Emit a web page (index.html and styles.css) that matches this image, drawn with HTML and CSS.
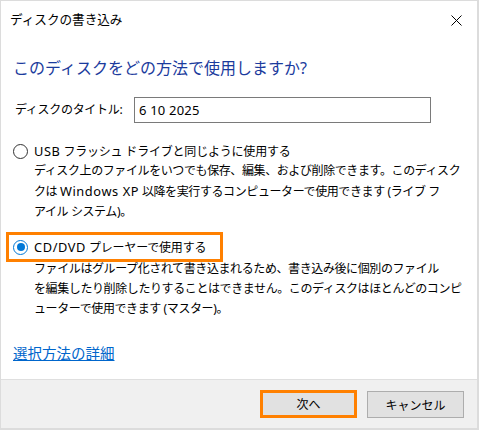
FILE: index.html
```html
<!DOCTYPE html>
<html lang="ja">
<head>
<meta charset="utf-8">
<title>ディスクの書き込み</title>
<link rel="stylesheet" href="styles.css">
</head>
<body>
<div class="window">
  <div class="titlebar">
    <span class="title">ディスクの書き込み</span>
    <svg class="close" width="11" height="11" viewBox="0 0 11 11"><path d="M0.5 0.5 L10.5 10.5 M10.5 0.5 L0.5 10.5" stroke="#000" stroke-width="1" fill="none"/></svg>
  </div>
  <div class="content">
    <div class="heading">このディスクをどの方法で使用しますか?</div>
    <div class="title-row">
      <span class="field-label">ディスクのタイトル:</span>
      <span class="field-input"><span class="latin">6 10 2025</span></span>
    </div>
    <div class="option">
      <div class="option-row">
        <span class="radio"></span>
        <span class="option-label"><span class="latin">USB</span> フラッシュ ドライブと同じように使用する</span>
      </div>
      <div class="desc">ディスク上のファイルをいつでも保存、編集、および削除できます。このディスク<br>クは <span class="latin">Windows XP</span> 以降を実行するコンピューターで使用できます (ライブ フ<br>アイル システム)。</div>
    </div>
    <div class="option option-second">
      <div class="option-row focused">
        <span class="radio checked"><span class="dot"></span></span>
        <span class="option-label"><span class="latin">CD/DVD</span> プレーヤーで使用する</span>
      </div>
      <div class="desc desc-second">ファイルはグループ化されて書き込まれるため、書き込み後に個別のファイル<br>を編集したり削除したりすることはできません。このディスクはほとんどのコンピ<br>ューターで使用できます (マスター)。</div>
    </div>
    <a class="link" href="#">選択方法の詳細</a>
  </div>
  <div class="footer">
    <span class="button default">次へ</span>
    <span class="button">キャンセル</span>
  </div>
</div>
</body>
</html>
```

FILE: styles.css
```css
html, body {
  margin: 0;
  padding: 0;
  background: #ffffff;
}

body {
  font-family: "Noto Sans", "Noto Sans CJK JP", sans-serif;
  font-size: 12px;
  color: #000000;
}

.latin {
  font-family: "Noto Sans", sans-serif;
  font-size: 12.8px;
  letter-spacing: 0.6px;
}

.window {
  width: 479px;
  height: 430px;
  box-sizing: border-box;
  border: 1px solid #dcdcdc;
  border-right-width: 2px;
  border-bottom-width: 2px;
  background: #ffffff;
  display: flex;
  flex-direction: column;
  overflow: hidden;
}

.titlebar {
  height: 37px;
  flex: none;
  display: flex;
  align-items: center;
  justify-content: space-between;
  padding: 0 15px 0 9px;
}

.title {
  font-size: 12.6px;
  line-height: 20px;
}

.close {
  display: block;
  margin-top: 1px;
}

.content {
  flex: 1;
  padding-left: 12px;
  display: flex;
  flex-direction: column;
  align-items: flex-start;
}

.heading {
  margin-top: 18px;
  font-size: 16px;
  line-height: 24px;
  color: #1b3b9d;
}

.title-row {
  margin-top: 17px;
  display: flex;
  align-items: center;
  padding-left: 2px;
}

.field-label {
  width: 119px;
  letter-spacing: -0.3px;
  line-height: 20px;
}

.field-input {
  width: 297px;
  height: 26px;
  box-sizing: border-box;
  border: 1px solid #7a7a7a;
  padding-left: 4px;
  line-height: 24px;
}

.field-input .latin {
  letter-spacing: 0.2px;
  font-size: 13px;
}

.option {
  margin-top: 18px;
  line-height: 20px;
}

.option-second {
  margin-top: 10px;
}

.option-row {
  display: flex;
  align-items: center;
  height: 20px;
  gap: 6px;
}

.option-row.focused {
  box-sizing: content-box;
  margin-left: -7px;
  padding: 2px 0 2px 4px;
  border: 3px solid #ff8000;
  width: 207px;
}

.radio {
  width: 15px;
  height: 15px;
  box-sizing: border-box;
  border: 1px solid #333333;
  border-radius: 50%;
  background: #ffffff;
  display: flex;
  align-items: center;
  justify-content: center;
  flex: none;
}

.radio.checked {
  border-color: #0078d7;
}

.dot {
  width: 8px;
  height: 8px;
  border-radius: 50%;
  background: #0078d7;
}

.option-label {
  white-space: nowrap;
  letter-spacing: -0.2px;
}

.option-label .latin {
  letter-spacing: 0.6px;
}

.desc {
  padding-left: 21px;
  white-space: nowrap;
  letter-spacing: -0.4px;
}

.desc .latin {
  letter-spacing: 0.6px;
}

.desc-second {
  margin-top: -3px;
}

.link {
  margin-top: 24px;
  font-size: 14.5px;
  line-height: 20px;
  color: #0066cc;
  text-decoration: underline;
}

.footer {
  height: 49px;
  flex: none;
  box-sizing: border-box;
  border-top: 1px solid #dfdfdf;
  background: #f0f0f0;
  display: flex;
  justify-content: flex-end;
  align-items: flex-start;
  gap: 10px;
  padding: 11px 13px 0 0;
}

.button {
  width: 97px;
  height: 27px;
  box-sizing: border-box;
  border: 1px solid #adadad;
  background: #e1e1e1;
  display: flex;
  align-items: center;
  justify-content: center;
  font-size: 12px;
}

.button.default {
  border: 3px solid #ff8000;
  height: 28px;
  margin-top: -1px;
}
```
